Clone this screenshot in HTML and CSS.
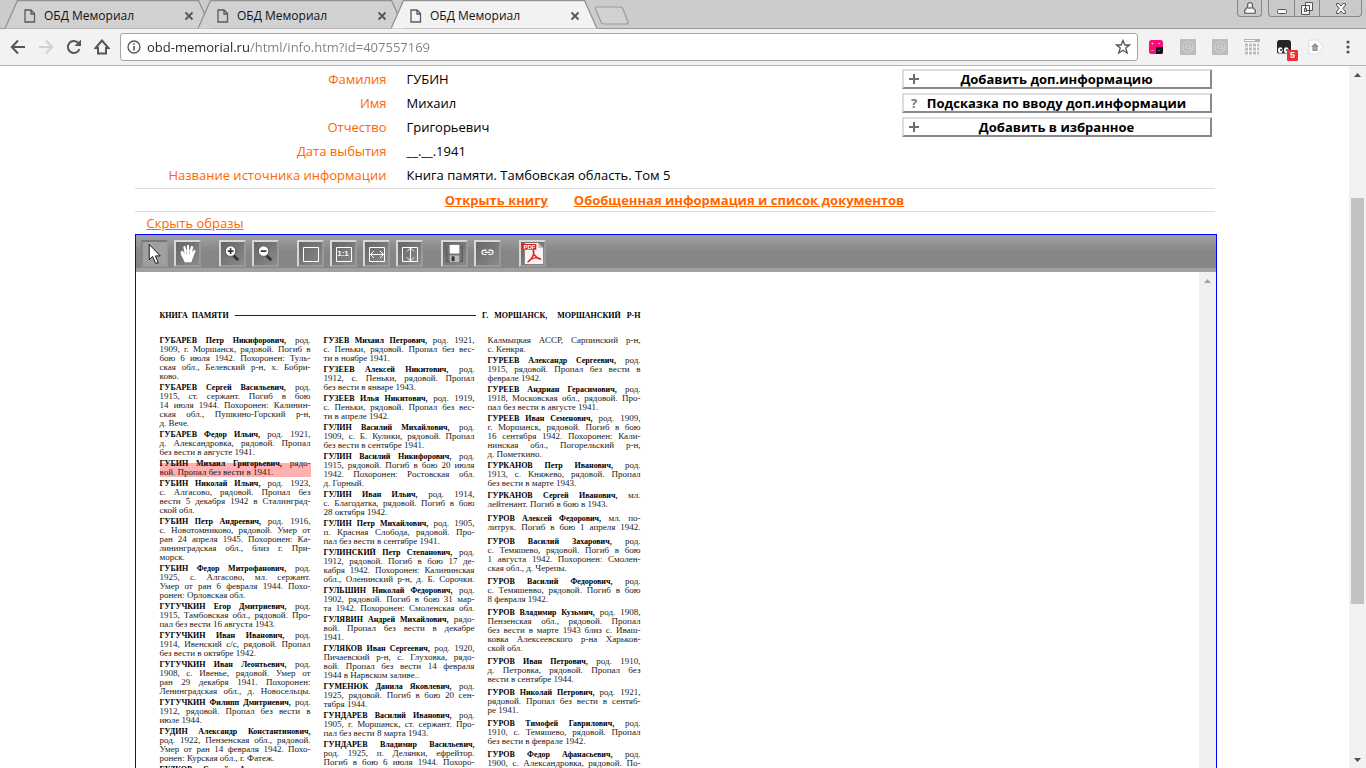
FILE: index.html
```html
<!DOCTYPE html>
<html lang="ru">
<head>
<meta charset="utf-8">
<title>ОБД Мемориал</title>
<link rel="stylesheet" href="styles.css">
</head>
<body>
<svg class="defs" aria-hidden="true">
  <symbol id="tab-shape" viewBox="0 0 206 29" preserveAspectRatio="none"><path d="M0 28.5 12.5.5H193.500L206 28.5" stroke="#929292" stroke-width="1.300"/></symbol>
  <symbol id="doc" viewBox="0 0 12 14"><path d="M1 1H7L10.500 4.500V13H1ZM7 1V5H10.500" fill="none" stroke="#5a5a5a" stroke-width="1.300"/></symbol>
  <symbol id="close" viewBox="0 0 10 10"><path d="M1.500 1.500 8.500 8.500M8.500 1.500 1.500 8.500" stroke="#555" stroke-width="1.800"/></symbol>
  <symbol id="at" viewBox="0 0 16 16"><path d="M0 0H16V16H0Z" fill="#bdbdbd"/><circle cx="8" cy="8" r="5.300" fill="none" stroke="#d2d2d2"/><circle cx="7.800" cy="8" r="2.200" fill="none" stroke="#d2d2d2"/><path d="M10 5.500V9.500Q12 11 13 8" fill="none" stroke="#d2d2d2"/></symbol>
  <symbol id="plus" viewBox="0 0 10 10"><path d="M5 0V10M0 5H10" stroke="#6c6c6c" stroke-width="2"/></symbol>
</svg>

<header class="chrome">
  <div class="tabstrip">
    <nav class="tabs">
      <div class="tab"><svg class="tab-bg"><use href="#tab-shape"/></svg><svg class="tab-doc"><use href="#doc"/></svg><a class="tab-name" href="#">ОБД Мемориал</a><button class="tab-close" aria-label="Закрыть"><svg><use href="#close"/></svg></button></div>
      <div class="tab"><svg class="tab-bg"><use href="#tab-shape"/></svg><svg class="tab-doc"><use href="#doc"/></svg><a class="tab-name" href="#">ОБД Мемориал</a><button class="tab-close" aria-label="Закрыть"><svg><use href="#close"/></svg></button></div>
      <div class="tab active"><svg class="tab-bg"><use href="#tab-shape"/></svg><svg class="tab-doc"><use href="#doc"/></svg><a class="tab-name" href="#">ОБД Мемориал</a><button class="tab-close" aria-label="Закрыть"><svg><use href="#close"/></svg></button></div>
      <button class="new-tab" aria-label="Новая вкладка"><svg viewBox="0 0 36 19"><path d="M3 1H26Q28 1 29 3L34 16Q34.500 18 32 18H10Q8 18 7 16L1.500 3Q1 1 3 1Z" fill="#d1d1d1" stroke="#999" stroke-width="1.200"/></svg></button>
    </nav>
    <div class="window-controls">
      <button class="user" aria-label="Пользователь"><svg viewBox="0 0 12 12"><path d="M4 5V2.500L5 1.500H7L8 2.500V5L9.500 7 10.500 8V10.500H1.500V8L2.500 7Z" fill="#f6f6f6" stroke="#555"/><path d="M4 6H8" stroke="#555"/></svg></button>
      <div class="frame-buttons">
        <button aria-label="Свернуть"><svg viewBox="0 0 14 14"><rect x="2.500" y="8.500" width="9" height="4" rx="1" fill="#f6f6f6" stroke="#555"/></svg></button>
        <button aria-label="Развернуть"><svg viewBox="0 0 14 14"><path d="M5.500 1.500H12.500V9.500H5.500ZM1.500 4.500H9.500V13.500H1.500Z" fill="#f6f6f6" stroke="#555"/><path d="M4.500 7.500H6.500V10.500H4.500Z" fill="#ccc" stroke="#555"/></svg></button>
        <button class="wide" aria-label="Закрыть окно"><svg viewBox="0 0 14 14"><path d="M2.500 2.500H5L7 5 9 2.500H11.500V4L9 7.500 11.500 11V12.500H9L7 10 5 12.500H2.500V11L5 7.500 2.500 4Z" fill="#f6f6f6" stroke="#555"/></svg></button>
      </div>
    </div>
  </div>
  <div class="navbar">
    <div class="nav-buttons">
      <button aria-label="Назад"><svg viewBox="0 0 16 16"><path d="M15 8H2M8 1.500 1.800 8 8 14.500" fill="none" stroke="#555" stroke-width="2"/></svg></button>
      <button aria-label="Вперёд"><svg viewBox="0 0 16 16"><path d="M1 8H14M8 1.500 14.200 8 8 14.500" fill="none" stroke="#d2d2d2" stroke-width="2"/></svg></button>
      <button aria-label="Обновить"><svg viewBox="0 0 16 16"><path d="M13.500 10A6 6 0 1 1 12.500 4.200" fill="none" stroke="#555" stroke-width="2"/><path d="M15 .5V7H8.500Z" fill="#555"/></svg></button>
      <button aria-label="Домой"><svg viewBox="0 0 16 16"><path d="M8 1.500 1.500 9H4V14.500H12V9H14.500Z" fill="none" stroke="#555" stroke-width="2"/></svg></button>
    </div>
    <div class="omnibox">
      <svg class="info" viewBox="0 0 14 14"><circle cx="7" cy="7" r="6" fill="none" stroke="#555" stroke-width="1.300"/><path d="M7 6V10.500M7 3.200V4.800" stroke="#555" stroke-width="1.600"/></svg>
      <input class="url" type="text" aria-label="Адрес" value="obd-memorial.ru/html/info.htm?id=407557169">
      <button class="star" aria-label="В закладки"><svg viewBox="0 0 16 16"><path d="M8 1.500 9.900 6H14.500L10.800 9 12.200 14 8 11.200 3.800 14 5.200 9 1.500 6H6.100Z" fill="none" stroke="#555" stroke-width="1.300"/></svg></button>
    </div>
    <div class="extensions">
      <button aria-label="Расширение"><svg viewBox="0 0 16 16"><rect x="1" y="1" width="14" height="14" rx="2.500" fill="#ff0a78"/><path d="M8 8H15V13Q15 15 13 15H8Z" fill="#111"/><path d="M3.500 4.500H5.500M4.500 3.500V5.500M10 4.500H12M3.500 11.500H5.500" stroke="#ffb5d5"/><circle cx="11" cy="11.500" r="1" fill="#555"/></svg></button>
      <button aria-label="Почта"><svg viewBox="0 0 16 16"><use href="#at"/></svg></button>
      <button aria-label="Почта 2"><svg viewBox="0 0 16 16"><use href="#at"/></svg></button>
      <button aria-label="Таблица"><svg viewBox="0 0 16 16"><path d="M0 0H16V3H0Z" fill="#b3b3b3"/><path d="M1 1H11V2H1Z" fill="#fff"/><path d="M1 4H15V15.500H1Z" fill="#fff"/><path d="M1 6H15M1 10H15M1 14H15" stroke="#bbb" stroke-width="3" stroke-dasharray="3 1"/></svg></button>
      <button aria-label="Скрипты"><svg viewBox="0 0 16 16"><path d="M3.500 1H12.500Q15 1 15 4V13Q15 14.500 13 14.500H3Q1 14.500 1 13V4Q1 1 3.500 1Z" fill="#262626"/><ellipse cx="4.300" cy="11.300" rx="2.300" ry="3" fill="#fff"/><ellipse cx="10.300" cy="11.300" rx="2.300" ry="3" fill="#fff"/><path d="M5 10V12M11 10V12" stroke="#262626" stroke-width="1.400"/></svg><span class="badge">5</span></button>
      <button aria-label="Метка"><svg viewBox="0 0 16 16"><path d="M1 1H10L15 8 10 15H1Z" fill="#fff" stroke="#ddd"/><path d="M7 4 11 8H9.500V12H4.500V8H3Z" fill="#929292"/><path d="M6.500 8.500H7.500V10H6.500Z" fill="#eee"/></svg></button>
      <button aria-label="Меню"><svg viewBox="0 0 16 16"><circle cx="8" cy="3" r="1.600" fill="#555"/><circle cx="8" cy="8" r="1.600" fill="#555"/><circle cx="8" cy="13" r="1.600" fill="#555"/></svg></button>
    </div>
  </div>
</header>

<div class="viewport">
  <main class="page">
    <section class="card">
      <table class="fields">
        <tr><th scope="row">Фамилия</th><td>ГУБИН</td></tr>
        <tr><th scope="row">Имя</th><td>Михаил</td></tr>
        <tr><th scope="row">Отчество</th><td>Григорьевич</td></tr>
        <tr><th scope="row">Дата выбытия</th><td>__.__.1941</td></tr>
        <tr><th scope="row">Название источника информации</th><td>Книга памяти. Тамбовская область. Том 5</td></tr>
      </table>
      <div class="actions">
        <button><span class="mark"><svg><use href="#plus"/></svg></span><span class="caption">Добавить доп.информацию</span></button>
        <button><span class="mark">?</span><span class="caption">Подсказка по вводу доп.информации</span></button>
        <button><span class="mark"><svg><use href="#plus"/></svg></span><span class="caption">Добавить в избранное</span></button>
      </div>
    </section>
    <nav class="book-links"><a href="#">Открыть книгу</a><a href="#">Обобщенная информация и список документов</a></nav>
    <div class="toggle"><a href="#">Скрыть образы</a></div>

    <section class="viewer">
      <div class="tools">
        <div class="group">
          <button class="pressed" aria-label="Выбор"><svg viewBox="0 0 24 24"><path d="M6.500 2.500V18.500L10 15 13 22H16L13 14.500H18Z" fill="#fff" stroke="#111"/></svg></button>
          <button aria-label="Рука"><svg viewBox="0 0 24 24"><path d="M5 10 7 9 9 12 7.500 5 9.500 4 11.500 10V3H13.500L14 10 16 4 18 5 16.800 11 19 8 20.500 9 17.500 17 16 21H9Q7 16 5 13Z" fill="#fff"/><path d="M11 10V13M14 10V13" stroke="#999" stroke-width=".6"/></svg></button>
        </div>
        <div class="group">
          <button aria-label="Увеличить"><svg viewBox="0 0 24 24"><path d="M13 14 18 19" stroke="#333" stroke-width="3"/><circle cx="10" cy="9.500" r="5.500" fill="#fff" stroke="#555"/><path d="M7 9.500H13M10 6.500V12.500" stroke="#333" stroke-width="1.800"/></svg></button>
          <button aria-label="Уменьшить"><svg viewBox="0 0 24 24"><path d="M13 14 18 19" stroke="#333" stroke-width="3"/><circle cx="10" cy="9.500" r="5.500" fill="#fff" stroke="#555"/><path d="M7 9.500H13" stroke="#333" stroke-width="1.800"/></svg></button>
        </div>
        <div class="group">
          <button aria-label="По размеру окна"><svg viewBox="0 0 23 23"><path d="M4.500 5.500H19.500V19.500H4.500Z" fill="none" stroke="#fff"/></svg></button>
          <button aria-label="Исходный размер"><svg viewBox="0 0 23 23"><path d="M4.500 5.500H19.500V19.500H4.500Z" fill="none" stroke="#fff"/></svg><span class="ratio">1:1</span></button>
          <button aria-label="По ширине"><svg viewBox="0 0 23 23"><path d="M4.500 5.500H19.500V19.500H4.500ZM5.500 12.500H18.500M9 9 5.500 12.500 9 16M15 9 18.500 12.500 15 16" fill="none" stroke="#fff"/></svg></button>
          <button aria-label="По высоте"><svg viewBox="0 0 23 23"><path d="M4.500 5.500H19.500V19.500H4.500ZM12.500 6V19M9 9.500 12.500 6 16 9.500M9 15.500 12.500 19 16 15.500" fill="none" stroke="#fff"/></svg></button>
        </div>
        <div class="group">
          <button aria-label="Сохранить"><svg viewBox="0 0 24 24"><path d="M3 3H21V21H3Z" fill="#777"/><path d="M4 3.500V20.500H20V3.500" fill="none" stroke="#555"/><path d="M7 3H17V12H7Z" fill="#fff"/><path d="M7 14H17V21H7Z" fill="#bbb"/><path d="M9 15H12V20H9Z" fill="#333"/></svg></button>
          <button aria-label="Ссылка"><svg viewBox="0 0 24 24"><path d="M11 8.500H8.500A2 2 0 0 0 8.500 13H11M13 8.500H15.500A2 2 0 0 1 15.500 13H13M9 10.800H15" fill="none" stroke="#fff" stroke-width="1.200"/></svg></button>
        </div>
        <div class="group">
          <button aria-label="Скачать PDF"><svg viewBox="0 0 24 24"><path d="M4 1H18L23 6V23H4Z" fill="#f6f6f6"/><path d="M18 1V6H23Z" fill="#bbb"/><path d="M1 2H16V8H1Z" fill="#d91e22"/><path d="M7 21C12 18 14 12 13 8C12 12 15 17 21 18C16 15 10 17 7 21Z" fill="none" stroke="#e02020" stroke-width="1.500"/></svg><span class="pdf">PDF</span></button>
        </div>
      </div>
      <div class="canvas">
        <article class="scan">
          <header class="scan-head"><b>КНИГА&nbsp; ПАМЯТИ</b><hr><b>Г.&nbsp;&nbsp; МОРШАНСК,&nbsp;&nbsp;&nbsp;&nbsp; МОРШАНСКИЙ&nbsp;&nbsp; Р-Н</b></header>
          <div class="columns">
            <div class="column">
<p><b>ГУБАРЕВ Петр Никифорович,</b> род.
1909, г. Моршанск, рядовой. Погиб в
бою 6 июля 1942. Похоронен: Туль-
ская обл., Белевский р-н, х. Бобри-<span>ково.</span></p>
<p><b>ГУБАРЕВ Сергей Васильевич,</b> род.
1915, ст. сержант. Погиб в бою
14 июля 1944. Похоронен: Калинин-
ская обл., Пушкино-Горский р-н,<span>д. Вече.</span></p>
<p><b>ГУБАРЕВ Федор Ильич,</b> род. 1921,
д. Александровка, рядовой. Пропал<span>без вести в августе 1941.</span></p>
<p class="hit"><b>ГУБИН Михаил Григорьевич,</b> рядо-<span>вой. Пропал без вести в 1941.</span></p>
<p><b>ГУБИН Николай Ильич,</b> род. 1923,
с. Алгасово, рядовой. Пропал без
вести 5 декабря 1942 в Сталинград-<span>ской обл.</span></p>
<p><b>ГУБИН Петр Андреевич,</b> род. 1916,
с. Новотомниково, рядовой. Умер от
ран 24 апреля 1945. Похоронен: Ка-
лининградская обл., близ г. При-<span>морск.</span></p>
<p><b>ГУБИН Федор Митрофанович,</b> род.
1925, с. Алгасово, мл. сержант.
Умер от ран 6 февраля 1944. Похо-<span>ронен: Орловская обл.</span></p>
<p><b>ГУГУЧКИН Егор Дмитриевич,</b> род.
1915, Тамбовская обл., рядовой. Про-<span>пал без вести 16 августа 1943.</span></p>
<p><b>ГУГУЧКИН Иван Иванович,</b> род.
1914, Ивенский с/с, рядовой. Пропал<span>без вести в октябре 1942.</span></p>
<p><b>ГУГУЧКИН Иван Леонтьевич,</b> род.
1908, с. Ивенье, рядовой. Умер от
ран 29 декабря 1941. Похоронен:<span class="full">Ленинградская обл., д. Новосельцы.</span></p>
<p><b>ГУГУЧКИН Филипп Дмитриевич,</b> род.
1912, рядовой. Пропал без вести в<span>июле 1944.</span></p>
<p><b>ГУДИН Александр Константинович,</b>
род. 1922, Пензенская обл., рядовой.
Умер от ран 14 февраля 1942. Похо-<span>ронен: Курская обл., г. Фатеж.</span></p>
<p><b>ГУДКОВ Сергей Алексеевич,</b> род.</p>
            </div>
            <div class="column">
<p><b>ГУЗЕВ Михаил Петрович,</b> род. 1921,
с. Пеньки, рядовой. Пропал без вес-<span>ти в ноябре 1941.</span></p>
<p><b>ГУЗЕЕВ Алексей Никитович,</b> род.
1912, с. Пеньки, рядовой. Пропал<span>без вести в январе 1943.</span></p>
<p><b>ГУЗЕЕВ Илья Никитович,</b> род. 1919,
с. Пеньки, рядовой. Пропал без вес-<span>ти в апреле 1942.</span></p>
<p><b>ГУЛИН Василий Михайлович,</b> род.
1909, с. Б. Кулики, рядовой. Пропал<span>без вести в сентябре 1941.</span></p>
<p><b>ГУЛИН Василий Никифорович,</b> род.
1915, рядовой. Погиб в бою 20 июля
1942. Похоронен: Ростовская обл.<span>д. Горный.</span></p>
<p><b>ГУЛИН Иван Ильич,</b> род. 1914,
с. Благодатка, рядовой. Погиб в бою<span>28 октября 1942.</span></p>
<p><b>ГУЛИН Петр Михайлович,</b> род. 1905,
п. Красная Слобода, рядовой. Про-<span>пал без вести в сентябре 1941.</span></p>
<p><b>ГУЛИНСКИЙ Петр Степанович,</b> род.
1912, рядовой. Погиб в бою 17 де-
кабря 1942. Похоронен: Калининская<span class="full">обл., Оленинский р-н, д. Б. Сорочки.</span></p>
<p><b>ГУЛЬШИН Николай Федорович,</b> род.
1902, рядовой. Погиб в бою 31 мар-<span class="full">та 1942. Похоронен: Смоленская обл.</span></p>
<p><b>ГУЛЯВИН Андрей Михайлович,</b> рядо-
вой. Пропал без вести в декабре<span>1941.</span></p>
<p><b>ГУЛЯКОВ Иван Сергеевич,</b> род. 1920,
Пичаевский р-н, с. Глуховка, рядо-
вой. Пропал без вести 14 февраля<span>1944 в Нарвском заливе..</span></p>
<p><b>ГУМЕНЮК Данила Яковлевич,</b> род.
1925, рядовой. Погиб в бою 20 сен-<span>тября 1944.</span></p>
<p><b>ГУНДАРЕВ Василий Иванович,</b> род.
1905, г. Моршанск, ст. сержант. Про-<span>пал без вести 8 марта 1943.</span></p>
<p><b>ГУНДАРЕВ Владимир Васильевич,</b>
род. 1925, п. Делянки, ефрейтор.
Погиб в бою 6 июля 1944. Похоро-</p>
            </div>
            <div class="column">
<p>Калмыцкая АССР, Сарпинский р-н,<span>с. Кенкря.</span></p>
<p><b>ГУРЕЕВ Александр Сергеевич,</b> род.
1915, рядовой. Пропал без вести в<span>феврале 1942.</span></p>
<p><b>ГУРЕЕВ Андриан Герасимович,</b> род.
1918, Московская обл., рядовой. Про-<span>пал без вести в августе 1941.</span></p>
<p><b>ГУРЕЕВ Иван Семенович,</b> род. 1909,
г. Моршанск, рядовой. Погиб в бою
16 сентября 1942. Похоронен: Кали-
нинская обл., Погорельский р-н,<span>д. Пометкино.</span></p>
<p><b>ГУРКАНОВ Петр Иванович,</b> род.
1913, с. Княжево, рядовой. Пропал<span>без вести в марте 1943.</span></p>
              <div class="loose">
<p class="apart"><b>ГУРКАНОВ Сергей Иванович,</b> мл.<span>лейтенант. Погиб в бою в 1943.</span></p>
<p class="apart"><b>ГУРОВ Алексей Федорович,</b> мл. по-<span class="full">литрук. Погиб в бою 1 апреля 1942.</span></p>
<p><b>ГУРОВ Василий Захарович,</b> род.
с. Темяшево, рядовой. Погиб в бою
1 августа 1942. Похоронен: Смолен-<span>ская обл., д. Черепы.</span></p>
<p><b>ГУРОВ Василий Федорович,</b> род.
с. Темяшевво, рядовой. Погиб в бою<span>8 февраля 1942.</span></p>
<p><b>ГУРОВ Владимир Кузьмич,</b> род. 1908,
Пензенская обл., рядовой. Пропал
без вести в марте 1943 близ с. Иваш-
ковка Алексеевского р-на Харьков-<span>ской обл.</span></p>
<p><b>ГУРОВ Иван Петрович,</b> род. 1910,
д. Петровка, рядовой. Пропал без<span>вести в сентябре 1944.</span></p>
<p><b>ГУРОВ Николай Петрович,</b> род. 1921,
рядовой. Пропал без вести в сентяб-<span>ре 1941.</span></p>
<p><b>ГУРОВ Тимофей Гаврилович,</b> род.
1910, с. Темяшево, рядовой. Пропал<span>без вести в феврале 1942.</span></p>
<p><b>ГУРОВ Федор Афанасьевич,</b> род.
1900, с. Александровка, рядовой. По-</p>
              </div>
            </div>
          </div>
        </article>
        <div class="inner-scroll"><svg viewBox="0 0 17 17"><path d="M5 11 8.500 7 12 11Z" fill="#a3a3a3"/></svg></div>
      </div>
    </section>
  </main>
  <div class="scrollbar">
    <svg viewBox="0 0 17 17"><path d="M5 11 8.500 7 12 11Z" fill="#505050"/></svg>
    <div class="track"><div class="thumb"></div></div>
    <svg viewBox="0 0 17 17"><path d="M5 7 8.500 11 12 7Z" fill="#505050"/></svg>
  </div>
</div>
</body>
</html>
```

FILE: styles.css
```css
* { box-sizing: border-box; }
body {
  margin: 0;
  height: 100vh;
  display: flex;
  flex-direction: column;
  overflow: hidden;
  background: #fff;
  color: #000;
  font-family: "Open Sans", "Noto Sans", sans-serif;
  font-size: 13px;
}
button { margin: 0; padding: 0; border: 0; background: none; font: inherit; color: inherit; }
button, svg { display: block; flex: none; }
.defs { display: none; }

/* Browser frame */
.tabstrip {
  display: flex;
  justify-content: space-between;
  height: 29px;
  background: #ccc;
  border-bottom: 1px solid #999;
}
.tabs { display: flex; height: 29px; padding-left: 5px; }
.tab {
  position: relative;
  display: flex;
  align-items: center;
  width: 206px;
  margin-right: -13px;
  padding: 2px 17px 0 19px;
}
.tab-bg { position: absolute; inset: 0; width: 100%; height: 29px; fill: #d1d1d1; }
.tab.active .tab-bg { fill: #f2f2f2; z-index: 1; }
.tab-doc { position: relative; z-index: 2; width: 12px; height: 14px; }
.tab-name {
  position: relative;
  z-index: 2;
  flex: 1;
  margin-left: 8px;
  font-size: 12px;
  line-height: 16px;
  color: #111;
  text-decoration: none;
}
.tab-close { position: relative; z-index: 2; }
.tab-close svg { width: 10px; height: 10px; }
.new-tab { margin: 6px 0 0 10px; height: 19px; }
.new-tab svg { width: 36px; height: 19px; }
.window-controls { display: flex; gap: 6px; padding-right: 4px; height: 17px; }
.window-controls button { display: grid; place-items: center; width: 25px; height: 16px; }
.window-controls svg { width: 14px; height: 14px; }
.window-controls .user, .frame-buttons {
  height: 17px;
  border: 1px solid #888;
  border-top: 0;
  border-radius: 0 0 4px 4px;
  background: #c9c9c9;
}
.frame-buttons { display: flex; }
.frame-buttons button + button { border-left: 1px solid #888; }
.window-controls .wide { width: 42px; }

.navbar {
  display: flex;
  align-items: center;
  height: 37px;
  padding: 0 2px 0 10px;
  background: #f2f2f2;
  border-bottom: 1px solid #b4b4b4;
}
.nav-buttons { display: flex; gap: 12px; width: 110px; }
.nav-buttons svg, .star svg { width: 16px; height: 16px; }
.omnibox {
  flex: 1;
  display: flex;
  align-items: center;
  height: 28px;
  padding: 0 6px;
  background: #fff;
  border: 1px solid #a5a5a5;
  border-radius: 3px;
}
.info { width: 14px; height: 14px; }
.url {
  flex: 1;
  min-width: 0;
  height: 24px;
  padding: 0;
  margin-left: 6px;
  border: 0;
  outline: 0;
  font: 13px/20px "Open Sans", "Noto Sans", sans-serif;
  color: transparent;
  background: linear-gradient(90deg, #222 102px, #808080 102px) text;
  -webkit-background-clip: text;
}
.extensions { display: flex; margin-left: 2px; }
.extensions button { position: relative; display: grid; place-items: center; width: 32px; height: 28px; }
.extensions svg { width: 16px; height: 16px; }
.badge {
  position: absolute;
  right: 2px;
  bottom: 0;
  width: 11px;
  height: 11px;
  border-radius: 1px;
  background: #ee3030;
  color: #fff;
  font: bold 9px/11px "Liberation Sans", sans-serif;
  text-align: center;
}

/* Page */
.viewport { flex: 1; min-height: 0; display: flex; }
.page {
  flex: 1;
  min-width: 0;
  display: flex;
  flex-direction: column;
  align-items: center;
}
.page > * { width: 1080px; max-width: 100%; }
.card { display: flex; justify-content: space-between; padding: 1px 3px 1px 0; }
.fields { border-collapse: collapse; line-height: 20px; }
.fields th { width: 252px; padding: 2px 0; font-weight: 400; text-align: right; color: #f60; white-space: nowrap; }
.fields td { padding: 2px 20px; }
.actions { display: flex; flex-direction: column; gap: 4px; width: 310px; padding-top: 2px; }
.actions button {
  display: grid;
  grid-template-columns: 1fr;
  align-items: center;
  height: 20px;
  border: 2px solid;
  border-color: #ddd #888 #888 #ddd;
  font-weight: 700;
  line-height: 16px;
}
.mark, .caption { grid-area: 1 / 1; }
.mark { width: 21px; display: grid; place-items: center; color: #777; }
.mark svg { width: 10px; height: 10px; }
a { color: #f60; }
.book-links {
  display: flex;
  justify-content: center;
  gap: 26px;
  border: 1px solid #ddd;
  border-width: 1px 0;
  font-weight: 700;
  line-height: 22px;
}
.toggle { padding-left: 12px; line-height: 22px; }

/* Image viewer */
.page > .viewer {
  width: 1082px;
  flex: 1;
  min-height: 0;
  display: flex;
  flex-direction: column;
  border: 1px solid #00f;
  border-bottom: 0;
  margin-left: 2px;
}
.tools {
  flex: none;
  display: flex;
  gap: 18px;
  height: 37px;
  padding: 5px;
  background: linear-gradient(#a3a3a3, #868686 16px, #868686 33px, #a0a0a0 33px);
}
.group { display: flex; gap: 6px; }
.tools button {
  position: relative;
  width: 27px;
  height: 27px;
  border: 2px solid;
  border-color: #d8d8d8 #999 #999 #d8d8d8;
  background: linear-gradient(135deg, #666, #8b8b8b);
}
.tools .pressed { border-color: #777 #999 #999 #888; background: #a0a0a0; }
.tools svg { width: 23px; height: 23px; }
.ratio, .pdf {
  position: absolute;
  inset: 0;
  color: #fff;
  font: bold 8px/24px "Liberation Sans", sans-serif;
  text-align: center;
}
.pdf { font-size: 6px; line-height: 10px; text-align: left; padding-left: 3px; }
.canvas { flex: 1; min-height: 0; display: flex; justify-content: space-between; overflow: hidden; }
.inner-scroll { width: 17px; background: #f0f0f0; }
.scan {
  padding: 38px 0 0 24px;
  color: #222;
  font: 9px/9px "Liberation Serif", serif;
}
.scan b { font-size: 8px; color: #000; }
.scan-head { display: flex; align-items: center; gap: 6px; height: 10px; }
.scan-head hr { flex: 1; margin: 0; border: 0; border-top: 1px solid #222; }
.columns { display: grid; grid-template-columns: 151px 151px 153px; gap: 13px; padding-top: 16px; }
.column, .loose { display: flex; flex-direction: column; gap: 2px; }
.loose { gap: 4px; padding-top: 1px; }
.scan p { margin: 0; white-space: pre-line; text-align-last: justify; }
.scan p span { display: block; text-align-last: left; }
.scan p .full { text-align-last: justify; }
.scan .apart { padding-bottom: 1px; }
.hit { background: linear-gradient(transparent 4px, #ffb0b0 4px); }

.scrollbar { display: flex; flex-direction: column; width: 17px; background: #f1f1f1; }
.scrollbar svg, .inner-scroll svg { width: 17px; height: 17px; }
.track { flex: 1; display: grid; grid-template-rows: 115fr 406fr 147fr; padding: 0 2px; }
.thumb { grid-row: 2; background: #c1c1c1; }
```
